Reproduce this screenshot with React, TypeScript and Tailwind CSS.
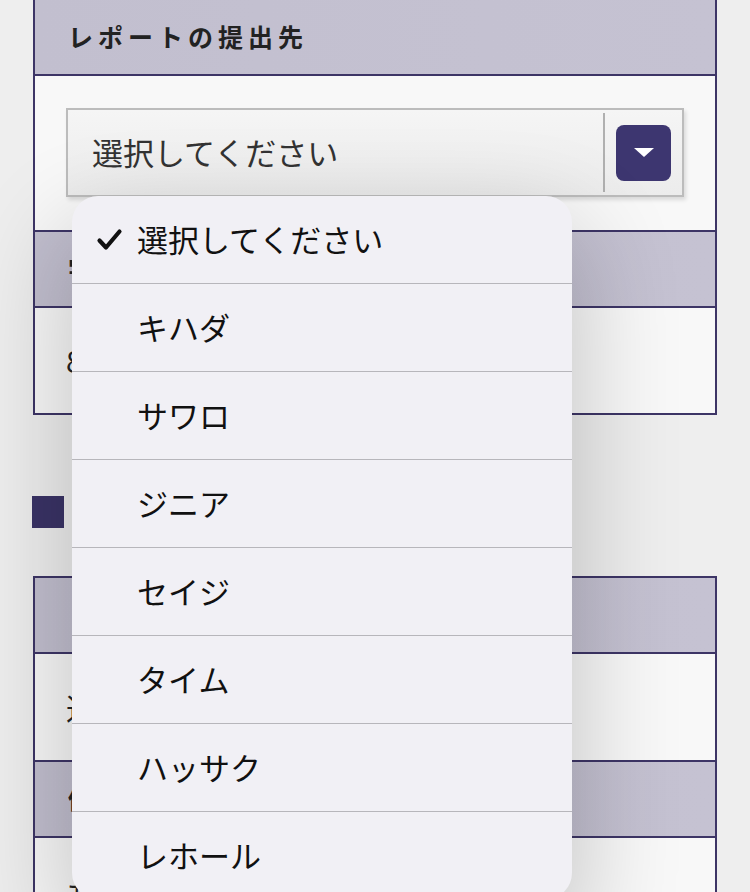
import React from "react";

const jp = "font-['Noto_Sans_CJK_JP','Noto_Sans',sans-serif]";

const options = ["選択してください", "キハダ", "サワロ", "ジニア", "セイジ", "タイム", "ハッサク", "レホール"];

function Header({ children }: { children: React.ReactNode }) {
  return (
    <div className="h-[74px] bg-gradient-to-r from-[#c2bfcf] to-[#c5c2d2] flex items-center pl-[33px] border-b-2 border-[#3d3566] box-content">
      <span className="text-[25px] font-bold tracking-[5px] text-[#222]">{children}</span>
    </div>
  );
}

function Body({ children, h }: { children: React.ReactNode; h: string }) {
  return (
    <div className={`${h} bg-[#f8f8f8] flex items-center px-[31px] text-[30px] text-[#222] border-b-2 border-[#3d3566] box-content`}>
      {children}
    </div>
  );
}

function Dropdown() {
  return (
    <div className="absolute left-[72px] top-[196px] w-[500px] rounded-[26px] overflow-hidden bg-[#f1f0f5] shadow-[0_40px_100px_10px_rgba(0,0,0,0.2)]">
      {options.map((o, i) => (
        <div
          key={o}
          className={`relative flex items-center pl-[65px] text-[31px] text-[#111] ${i === 0 ? "h-[87px]" : "h-[88px] border-t border-[#b7b6bb]"}`}
        >
          {i === 0 && (
            <svg className="absolute left-[24px] top-[32px]" width="27" height="23" viewBox="0 0 27 23">
              <path d="M3.5 12.5 L10 19.5 L23.5 3.5" fill="none" stroke="#111" strokeWidth="4.2" strokeLinecap="round" strokeLinejoin="round" />
            </svg>
          )}
          {o}
        </div>
      ))}
    </div>
  );
}

export default function App() {
  return (
    <div className={`relative h-[892px] overflow-hidden bg-[#eeeeee] ${jp}`}>
      {/* card 1 */}
      <div className="mx-[33px] border-x-2 border-[#3d3566]">
        <Header>レポートの提出先</Header>
        <div className="h-[122px] bg-[#f8f8f8] px-[31px] pt-[32px] border-b-2 border-[#3d3566] box-content">
          <div className="h-[89px] flex items-center border-2 border-[#bcbcbc] bg-gradient-to-b from-[#f5f5f5] to-[#ececec] shadow-[2px_3px_4px_rgba(0,0,0,0.12)]">
            <span className="flex-1 pl-[24px] text-[31px] text-[#333]">選択してください</span>
            <div className="w-[2px] h-[79px] bg-[#b0b0b0]" />
            <div className="mx-[11px] w-[55px] h-[56px] rounded-[8px] bg-[#3d3670] flex items-center justify-center">
              <svg width="20" height="9" viewBox="0 0 20 9">
                <polygon points="0,0 20,0 10,9" fill="#fff" />
              </svg>
            </div>
          </div>
        </div>
        <Header>字数制限</Header>
        <Body h="h-[105px]">8000字以内</Body>
      </div>

      {/* section 2 */}
      <div className="mt-[81px] ml-[32px] h-[32px] flex items-center gap-4">
        <div className="w-[32px] h-[32px] bg-[#3a3366]" />
        <span className="text-[28px] leading-none font-bold text-[#222]">提出者情報</span>
      </div>

      <div className="mt-[48px] mx-[33px] border-x-2 border-t-2 border-[#3d3566]">
        <Header>レポート本文</Header>
        <Body h="h-[106px]">送信前に確認してください</Body>
        <Header>備考</Header>
        <Body h="h-[106px]">お問い合わせ</Body>
      </div>

      <Dropdown />
    </div>
  );
}
